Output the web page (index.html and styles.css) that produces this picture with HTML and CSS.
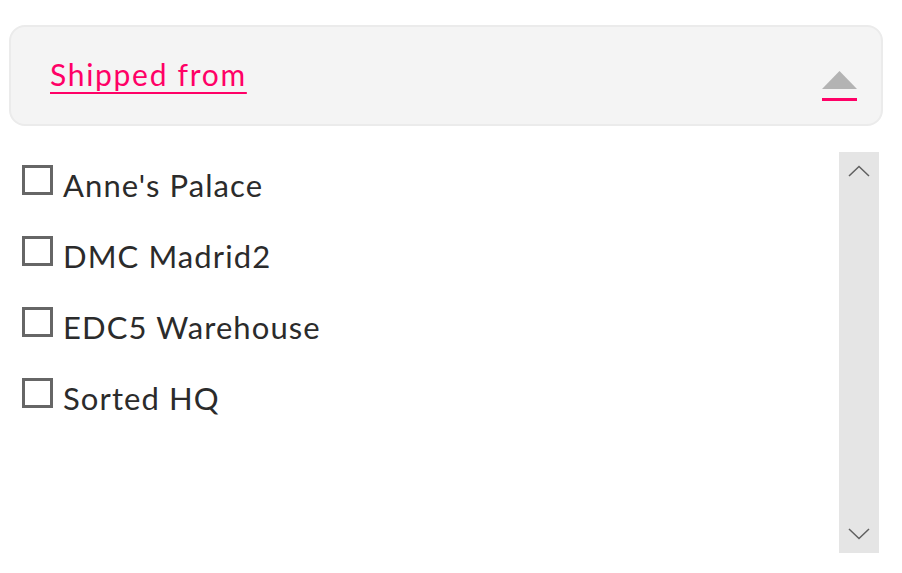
FILE: index.html
```html
<!DOCTYPE html>
<html>
<head>
<meta charset="utf-8">
<link rel="stylesheet" href="styles.css">
</head>
<body>
<div class="panel">
  <div class="header">
    <a class="title" href="#">Shipped from</a>
    <span class="toggle">
      <svg class="tri" width="35" height="18" viewBox="0 0 35 18"><polygon points="0,18 17.5,0 35,18" fill="#b3b3b3"/></svg>
      <span class="bar"></span>
    </span>
  </div>
  <div class="body">
    <ul class="list">
      <li class="item"><span class="box"></span><span class="label">Anne's Palace</span></li>
      <li class="item"><span class="box"></span><span class="label">DMC Madrid2</span></li>
      <li class="item"><span class="box"></span><span class="label">EDC5 Warehouse</span></li>
      <li class="item"><span class="box"></span><span class="label">Sorted HQ</span></li>
    </ul>
    <div class="scrollbar">
      <svg width="22" height="12" viewBox="0 0 22 12"><polyline points="1,11 11,1.5 21,11" fill="none" stroke="#606060" stroke-width="1.5"/></svg>
      <svg width="22" height="12" viewBox="0 0 22 12"><polyline points="1,1 11,10.5 21,1" fill="none" stroke="#606060" stroke-width="1.5"/></svg>
    </div>
  </div>
</div>
</body>
</html>
```
FILE: styles.css
```css
html, body {
  margin: 0;
  padding: 0;
  background: #ffffff;
}
body {
  font-family: Lato, "Open Sans", sans-serif;
  color: #2b2b2b;
}
.panel {
  padding: 25px 19px 0 9px;
}
.header {
  height: 101px;
  box-sizing: border-box;
  border: 2px solid #ebebeb;
  border-radius: 16px;
  background: #f4f4f4;
  display: flex;
  align-items: center;
  justify-content: space-between;
  padding: 0 24px 0 39px;
}
.title {
  color: #ff0066;
  font-size: 30px;
  letter-spacing: 1.7px;
  line-height: 36px;
  text-decoration: underline;
  text-decoration-thickness: 2px;
  text-underline-offset: 6px;
  margin-top: -3px;
}
.toggle {
  display: flex;
  flex-direction: column;
  align-items: center;
  gap: 9px;
  margin-top: 20px;
}
.tri {
  display: block;
}
.bar {
  display: block;
  width: 35px;
  height: 3px;
  background: #ff0066;
}
.body {
  display: grid;
  grid-template-columns: 1fr 40px;
  margin-top: 26px;
  padding-right: 4px;
}
.list {
  list-style: none;
  margin: 0;
  padding: 13px 0 0 13px;
}
.item {
  display: flex;
  height: 71px;
  align-items: flex-start;
}
.box {
  width: 31px;
  height: 30px;
  box-sizing: border-box;
  border: 3px solid #666666;
  margin-right: 10px;
  flex: none;
}
.label {
  font-size: 31px;
  letter-spacing: 1.1px;
  line-height: 36px;
  margin-top: 2px;
}
.scrollbar {
  height: 401px;
  background: #e5e5e5;
  display: flex;
  flex-direction: column;
  justify-content: space-between;
  align-items: center;
  padding: 13px 0 13px;
  box-sizing: border-box;
}
.scrollbar svg {
  display: block;
}
```
